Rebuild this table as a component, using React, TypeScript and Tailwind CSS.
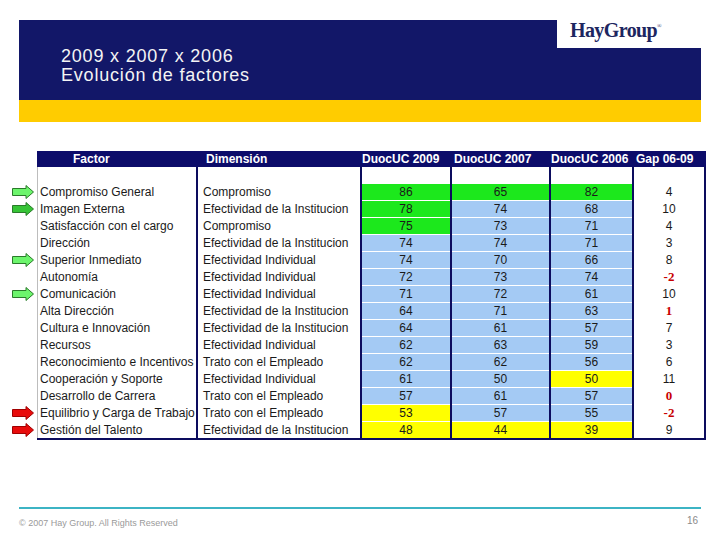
import React from "react";

type C = "g" | "b" | "y";
type Row = { f: string; d: string; v: number[]; c: C[]; gap: number; red?: boolean; arrow?: "g" | "G" | "r" };

const rows: Row[] = [
  { f: "Compromiso General", d: "Compromiso", v: [86, 65, 82], c: ["g", "g", "g"], gap: 4, arrow: "g" },
  { f: "Imagen Externa", d: "Efectividad de la Institucion", v: [78, 74, 68], c: ["g", "b", "b"], gap: 10, arrow: "G" },
  { f: "Satisfacción con el cargo", d: "Compromiso", v: [75, 73, 71], c: ["g", "b", "b"], gap: 4 },
  { f: "Dirección", d: "Efectividad de la Institucion", v: [74, 74, 71], c: ["b", "b", "b"], gap: 3 },
  { f: "Superior Inmediato", d: "Efectividad Individual", v: [74, 70, 66], c: ["b", "b", "b"], gap: 8, arrow: "g" },
  { f: "Autonomía", d: "Efectividad Individual", v: [72, 73, 74], c: ["b", "b", "b"], gap: -2, red: true },
  { f: "Comunicación", d: "Efectividad Individual", v: [71, 72, 61], c: ["b", "b", "b"], gap: 10, arrow: "g" },
  { f: "Alta Dirección", d: "Efectividad de la Institucion", v: [64, 71, 63], c: ["b", "b", "b"], gap: 1, red: true },
  { f: "Cultura e Innovación", d: "Efectividad de la Institucion", v: [64, 61, 57], c: ["b", "b", "b"], gap: 7 },
  { f: "Recursos", d: "Efectividad Individual", v: [62, 63, 59], c: ["b", "b", "b"], gap: 3 },
  { f: "Reconocimiento e Incentivos", d: "Trato con el Empleado", v: [62, 62, 56], c: ["b", "b", "b"], gap: 6 },
  { f: "Cooperación y Soporte", d: "Efectividad Individual", v: [61, 50, 50], c: ["b", "b", "y"], gap: 11 },
  { f: "Desarrollo de Carrera", d: "Trato con el Empleado", v: [57, 61, 57], c: ["b", "b", "b"], gap: 0, red: true },
  { f: "Equilibrio y Carga de Trabajo", d: "Trato con el Empleado", v: [53, 57, 55], c: ["y", "b", "b"], gap: -2, red: true, arrow: "r" },
  { f: "Gestión del Talento", d: "Efectividad de la Institucion", v: [48, 44, 39], c: ["y", "y", "y"], gap: 9, arrow: "r" },
];

const bg: Record<C, string> = {
  g: "bg-[#1ce81c]",
  b: "bg-[#a4caf4]",
  y: "bg-[#ffff00]",
};

function Arrow({ kind }: { kind: "g" | "G" | "r" }) {
  const fill = kind === "g" ? "#6cf56c" : kind === "G" ? "#36c436" : "#e80c0c";
  const stroke = kind === "r" ? "#a00000" : "#2a7a2a";
  return (
    <svg width="22" height="14" viewBox="0 0 22 14">
      <path d="M0.5 3.5 H14 V0.5 L21.5 7 L14 13.5 V10.5 H0.5 Z" fill={fill} stroke={stroke} strokeWidth="1" />
    </svg>
  );
}

const grid = "grid grid-cols-[37px_159px_164px_90px_99px_83px_74px]";
const navyLine = "border-[#0c0c5e]";

export default function App() {
  return (
    <div className="w-[720px] h-[540px] bg-white flex flex-col overflow-hidden font-['Liberation_Sans',Arial,sans-serif]">
      {/* Header */}
      <div className="mt-[20px] mx-[19px] flex h-[80px]">
        <div className="flex-1 bg-[#121768] pl-[42px] pt-[27px] text-[18px] leading-[19px] tracking-[0.8px] text-[#f4f4f4]">
          <div>2009 x 2007 x 2006</div>
          <div>Evolución de factores</div>
        </div>
        <div className="w-[144px] flex flex-col">
          <div className="h-[28px] bg-white pl-[13px] flex items-start">
            <span className="font-['Liberation_Serif',serif] font-bold text-[20px] leading-[20px] tracking-[-0.6px] text-[#1d2660]">
              HayGroup
            </span>
            <span className="font-['Liberation_Serif',serif] text-[6px] leading-[6px] mt-[3px] text-[#1d2660]">®</span>
          </div>
          <div className="flex-1 bg-[#121768]" />
        </div>
      </div>
      <div className="mx-[19px] h-[22px] bg-[#ffcc00]" />

      {/* Table */}
      <div className="mt-[29px] text-[12px] leading-[16px] text-[#1a1a1a]">
        <div className={`${grid} h-[16px] font-bold text-white`}>
          <div />
          <div className="bg-[#0c0c6a] pl-[36px]">Factor</div>
          <div className="bg-[#0c0c6a] pl-[10px]">Dimensión</div>
          <div className="bg-[#0c0c6a] pl-[2px] whitespace-nowrap">DuocUC 2009</div>
          <div className="bg-[#0c0c6a] pl-[4px] whitespace-nowrap">DuocUC 2007</div>
          <div className="bg-[#0c0c6a] pl-[2px] whitespace-nowrap">DuocUC 2006</div>
          <div className="bg-[#0c0c6a] pl-[4px] whitespace-nowrap">Gap 06-09</div>
        </div>
        <div className={`${grid} h-[16px]`}>
          <div />
          <div className="border-l border-[#bdbdbd]" />
          <div className={`border-l-2 ${navyLine}`} />
          <div className={`border-l-2 ${navyLine}`} />
          <div className={`border-l-2 ${navyLine}`} />
          <div className={`border-l-2 ${navyLine}`} />
          <div className={`border-l-2 border-r-2 ${navyLine}`} />
        </div>
        {rows.map((r, i) => (
          <div key={i} className={`${grid} h-[17px]`}>
            <div className="pl-[12px] flex items-center pt-[1px]">{r.arrow ? <Arrow kind={r.arrow} /> : null}</div>
            <div className="border-l border-[#bdbdbd] pt-[1px] pl-[2px] whitespace-nowrap overflow-hidden">{r.f}</div>
            <div className={`border-l-2 ${navyLine} pt-[1px] pl-[5px] whitespace-nowrap overflow-hidden`}>{r.d}</div>
            {r.v.map((v, j) => (
              <div key={j} className={`border-l-2 ${navyLine} pt-[1px]`}>
                <div className={`h-[16px] text-center ${bg[r.c[j]]}`}>{v}</div>
              </div>
            ))}
            <div className={`border-l-2 border-r-2 ${navyLine} pt-[1px] text-center`}>
              {r.red ? (
                <span className="font-['Liberation_Serif',serif] font-bold text-[#c80000] text-[13px]">{r.gap}</span>
              ) : (
                <span>{r.gap}</span>
              )}
            </div>
          </div>
        ))}
        <div className="ml-[37px] w-[669px] h-[2px] bg-[#0c0c5e]" />
      </div>

      {/* Footer */}
      <div className="mx-[19px] mt-[67px] h-[2px] bg-[#3cb4c4]" />
      <div className="mx-[19px] flex justify-between items-start">
        <div className="mt-[8px] text-[9px] leading-[12px] text-[#9a9a9a]">© 2007 Hay Group. All Rights Reserved</div>
        <div className="mt-[6px] pr-[3px] text-[10px] leading-[12px] text-[#8a8a8a]">16</div>
      </div>
    </div>
  );
}
